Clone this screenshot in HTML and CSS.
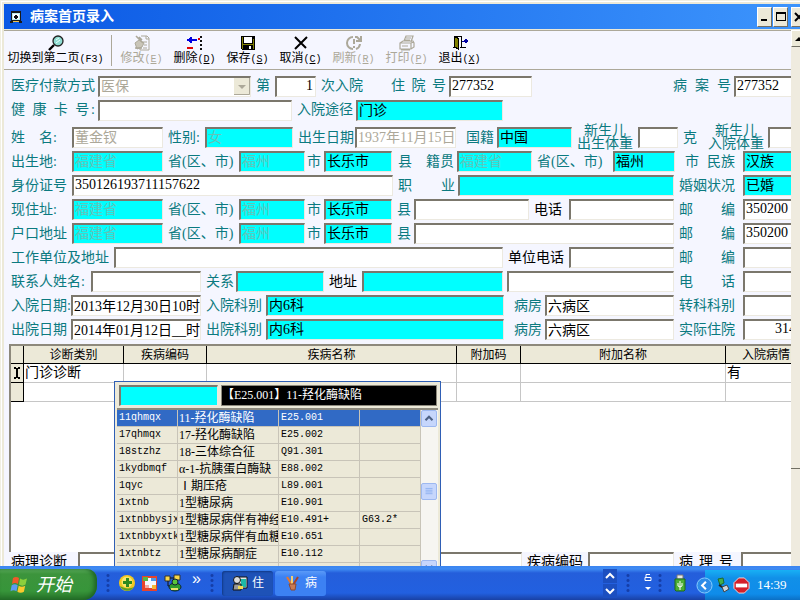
FILE: index.html
```html
<!DOCTYPE html>
<html lang="zh-CN">
<head>
<meta charset="utf-8">
<title>病案首页录入</title>
<link rel="stylesheet" href="styles.css">
</head>
<body>
<main class="window">
  <header class="titlebar">
    <svg class="app-icon" viewBox="0 0 12 12" shape-rendering="crispEdges"><path fill="#1a1a1a" d="M1 0h10v10H1zM0 10h3v2H0zM9 10h3v2H9z"/><path fill="#bfeee8" d="M2 2h8v7H2z"/><path fill="#fff" d="M3 3h6v5H3z"/><path fill="#111" d="M5 4h2v1h1v2H7v1H5V7H4V5h1z"/><path fill="#f2c14e" d="M3 10h6v1H3z"/></svg>
    <h1>病案首页录入</h1>
    <div class="window-buttons">
      <button aria-label="最小化"><svg viewBox="0 0 12 12" shape-rendering="crispEdges"><path d="M2 8h6v2H2z"/></svg></button>
      <button aria-label="最大化"><svg viewBox="0 0 12 12" shape-rendering="crispEdges"><path fill-rule="evenodd" d="M1 1h10v9H1zM2 3v6h8V3z"/></svg></button>
      <button class="close" aria-label="关闭"><svg viewBox="0 0 12 12"><path d="M2 2l8 8M10 2l-8 8" stroke="#000" stroke-width="2"/></svg></button>
    </div>
  </header>
  <div class="client">
    <div class="page">
      <nav class="toolbar">
        <button class="wide"><svg viewBox="0 0 16 16"><path d="M1 15l5-5" stroke="#000" stroke-width="2.4"/><circle cx="10" cy="6" r="5" fill="#8fdcd2" stroke="#222" stroke-width="1.3"/><path d="M8 5l3-2M8 8l4-3" stroke="#e8fffb"/></svg><span>切换到第二页<b>(F3)</b></span></button>
        <i class="divider"></i>
        <button disabled><svg viewBox="0 0 16 16" fill="none" stroke="#aca899"><path d="M7 1h6l2 2v12H6V9M12 1v3h3M9 7h4M10 10h3M9 13h4"/><path fill="#c9c5b8" d="M1 8l4-3 5 3-2 4-5 2z"/><path d="M2 1l7 7M1 13h7M5 2l3 3" stroke-width="1.6"/></svg><span>修改<b>(<u>E</u>)</b></span></button>
        <button><svg viewBox="0 0 16 16" shape-rendering="crispEdges"><path fill="#0000e0" d="M0 4h2V3h1V2h2v2h5v2H5v2H3V7H2V6H0z"/><path fill="#e00000" d="M0 12h6v2H0zM11 3h2v2h-2z"/><path fill="#111" d="M13 1h2v2h-2zM13 5h2v2h-2zM13 9h2v2h-2zM13 13h2v2h-2z"/></svg><span>删除<b>(<u>D</u>)</b></span></button>
        <button><svg viewBox="0 0 16 16" shape-rendering="crispEdges"><path fill="#000" d="M1 1h14v14H2l-1-1z"/><path fill="#808000" d="M2 2h1v12H2zM13 4h1v10h-1zM3 9h10v1H3z"/><path fill="#fff" d="M4 2h8v6H4zM9 11h2v3H9z"/></svg><span>保存<b>(<u>S</u>)</b></span></button>
        <button><svg viewBox="0 0 16 16"><path d="M2 2l11 11M14 2L2 14" stroke="#000" stroke-width="2"/></svg><span>取消<b>(<u>C</u>)</b></span></button>
        <button disabled><svg viewBox="0 0 16 16" fill="none" stroke="#aca899" stroke-width="2"><path d="M7 2a6 6 0 1 0 0 12M10 14a6 6 0 0 0 4-5M9 2l2 0 3 3M15 1v5h-5M8 4v5M8 11v2"/></svg><span>刷新<b>(<u>R</u>)</b></span></button>
        <button disabled><svg viewBox="0 0 16 16" fill="none" stroke="#aca899" stroke-width="1.2"><path d="M5 6l2-5h7l-2 6M7 3h5M6 5h5M1 8l3-2h10l1 2v4l-3 2H1zM1 8h11v6M12 8l3-1M3 11h6M2 15h9"/></svg><span>打印<b>(<u>P</u>)</b></span></button>
        <button><svg viewBox="0 0 16 16" shape-rendering="crispEdges"><path fill="#000" d="M2 1h8v1H2zM9 1h1v12H9zM8 12h6v1H8zM1 12h2v1H1z"/><path fill="#808000" stroke="#000" d="M2.500 1.500l4 2v11l-4-3z"/><path fill="#0000a0" d="M10 6h2V5h1V4h2v1h1v2h-1v1h-2V7h-3z"/></svg><span>退出<b>(<u>X</u>)</b></span></button>
      </nav>

      <form class="record">
        <div class="group">
          <div class="row r-pay">
            <label for="pay">医疗付款方式</label>
            <select id="pay" disabled><option>医保</option></select>
            <label for="times">第</label><input id="times" class="num" value="1">
            <label for="times">次入院</label>
            <label class="spread tight" for="hno">住 院 号</label><input id="hno" value="277352">
            <span></span>
            <label class="spread tight" for="rno">病 案 号</label><input id="rno" value="277352">
          </div>
          <div class="row r-card">
            <label class="spread tight" for="card">健 康 卡 号:</label><input id="card">
            <label for="way">入院途径</label><input id="way" class="cy" value="门诊">
            <span></span>
          </div>
        </div>
        <div class="group lower">
          <div class="row r-name">
            <label for="name">姓　名:</label><input id="name" disabled value="董金钗">
            <label for="sex">性别:</label><input id="sex" class="cy" disabled value="女">
            <label for="birth">出生日期</label><input id="birth" disabled value="1937年11月15日">
            <label class="end" for="nation">国籍</label><input id="nation" class="cy" value="中国">
            <label class="stack" for="w1">新生儿<br>出生体重</label><input id="w1">
            <label for="w1">克</label>
            <label class="stack" for="w2">新生儿<br>入院体重</label><input id="w2">
          </div>
          <div class="row r-born">
            <label for="bp">出生地:</label><input id="bp" class="cy" disabled value="福建省">
            <label for="bp">省(区、市)</label><input id="bc" aria-label="出生地市" class="cy" disabled value="福州">
            <label class="end" for="bc">市</label><input id="bx" aria-label="出生地县" class="cy" value="长乐市">
            <label class="end" for="bx">县</label>
            <label class="end" for="np">籍贯</label><input id="np" class="cy" disabled value="福建省">
            <label for="np">省(区、市)</label><input id="nc" aria-label="籍贯市" class="cy" value="福州">
            <label class="end" for="nc">市</label>
            <label for="ethnic">民族</label><input id="ethnic" class="cy" value="汉族">
          </div>
          <div class="row r-id">
            <label for="idno">身份证号</label><input id="idno" value="350126193711157622">
            <label class="spread tight" for="job">职 业</label><input id="job" class="cy">
            <label for="marry">婚姻状况</label><input id="marry" class="cy" value="已婚">
          </div>
          <div class="row r-live">
            <label for="lp">现住址:</label><input id="lp" class="cy" disabled value="福建省">
            <label for="lp">省(区、市)</label><input id="lc" aria-label="现住址市" class="cy" disabled value="福州">
            <label class="end" for="lc">市</label><input id="lx" aria-label="现住址县" class="cy" value="长乐市">
            <label class="end" for="lx">县</label><input aria-label="现住址详细">
            <label class="dark" for="tel">电话</label><input id="tel">
            <label class="spread" for="zip1">邮 编</label><input id="zip1" value="350200">
          </div>
          <div class="row r-reg">
            <label for="gp">户口地址</label><input id="gp" class="cy" disabled value="福建省">
            <label for="gp">省(区、市)</label><input id="gc" aria-label="户口地址市" class="cy" disabled value="福州">
            <label class="end" for="gc">市</label><input id="gx" aria-label="户口地址县" class="cy" value="长乐市">
            <label class="end" for="gx">县</label><input aria-label="户口地址详细">
            <label class="spread" for="zip2">邮 编</label><input id="zip2" value="350200">
          </div>
          <div class="row r-work">
            <label for="work">工作单位及地址</label><input id="work">
            <label class="dark" for="wtel">单位电话</label><input id="wtel">
            <label class="spread" for="zip3">邮 编</label><input id="zip3">
          </div>
          <div class="row r-contact">
            <label for="cname">联系人姓名:</label><input id="cname">
            <label for="rel">关系</label><input id="rel" class="cy">
            <label class="dark" for="caddr">地址</label><input id="caddr" class="cy">
            <span></span><input aria-label="联系人详细地址">
            <label class="spread" for="ctel">电 话</label><input id="ctel">
          </div>
          <div class="row r-stay">
            <label for="din">入院日期:</label><input id="din" value="2013年12月30日10时">
            <label for="kin">入院科别</label><input id="kin" class="cy" value="内6科">
            <label class="end" for="win">病房</label><input id="win" value="六病区">
            <label for="move">转科科别</label><input id="move">
          </div>
          <div class="row r-stay">
            <label for="dout">出院日期</label><input id="dout" value="2014年01月12日__时">
            <label for="kout">出院科别</label><input id="kout" class="cy" value="内6科">
            <label class="end" for="wout">病房</label><input id="wout" value="六病区">
            <label for="days">实际住院</label><input id="days" class="num" value="314">
          </div>
        </div>

        <section class="diagnosis">
          <table class="grid">
            <colgroup><col class="c-mark"><col class="c-kind"><col class="c-code"><col><col class="c-extra"><col class="c-exname"><col class="c-state"></colgroup>
            <thead><tr><th></th><th>诊断类别</th><th>疾病编码</th><th>疾病名称</th><th>附加码</th><th>附加名称</th><th>入院病情</th></tr></thead>
            <tbody>
              <tr><th><svg viewBox="0 0 8 12" shape-rendering="crispEdges"><path d="M1 0h2v1h2V0h2v2H5v8h2v2H5v-1H3v1H1v-2h2V2H1z"/></svg></th><td>门诊诊断</td><td></td><td></td><td></td><td></td><td>有</td></tr>
              <tr><th></th><td></td><td></td><td></td><td></td><td></td><td></td></tr>
            </tbody>
          </table>
          <div class="lookup">
            <div class="lookup-head">
              <input class="cy" aria-label="检索码">
              <output>【E25.001】11-羟化酶缺陷</output>
            </div>
            <div class="lookup-body">
              <table>
                <colgroup><col class="k-py"><col class="k-name"><col class="k-code"><col></colgroup>
                <tbody>
                <tr class="picked"><td>11qhmqx</td><td class="zh">11-羟化酶缺陷</td><td>E25.001</td><td></td></tr>
                <tr><td>17qhmqx</td><td class="zh">17-羟化酶缺陷</td><td>E25.002</td><td></td></tr>
                <tr><td>18stzhz</td><td class="zh">18-三体综合征</td><td>Q91.301</td><td></td></tr>
                <tr><td>1kydbmqf</td><td class="zh">α-1-抗胰蛋白酶缺</td><td>E88.002</td><td></td></tr>
                <tr><td>1qyc</td><td class="zh">Ⅰ期压疮</td><td>L89.001</td><td></td></tr>
                <tr><td>1xtnb</td><td class="zh">1型糖尿病</td><td>E10.901</td><td></td></tr>
                <tr><td>1xtnbbysjx</td><td class="zh">1型糖尿病伴有神经</td><td>E10.491+</td><td>G63.2*</td></tr>
                <tr><td>1xtnbbyxtk</td><td class="zh">1型糖尿病伴有血糖</td><td>E10.651</td><td></td></tr>
                <tr><td>1xtnbtz</td><td class="zh">1型糖尿病酮症</td><td>E10.112</td><td></td></tr>
                <tr><td></td><td></td><td></td><td></td></tr>
                </tbody>
              </table>
              <div class="luna-scroll">
                <button type="button" aria-label="向上"><svg viewBox="0 0 16 16" fill="none" stroke="#4d6185" stroke-width="2.4"><path d="M4 10l4-4 4 4"/></svg></button>
                <i><svg viewBox="0 0 16 16" stroke="#8caff0"><path d="M4 4.500h8M4 6.500h8M4 8.500h8M4 10.500h8"/></svg></i>
                <button type="button" aria-label="向下"><svg viewBox="0 0 16 16" fill="none" stroke="#4d6185" stroke-width="2.4"><path d="M4 5l4 4 4-4"/></svg></button>
              </div>
            </div>
          </div>
        </section>

        <div class="row r-path">
          <label class="dark" for="path">病理诊断</label><input id="path">
          <label class="dark" for="pcode">疾病编码</label><input id="pcode">
          <label class="dark spread" for="pno">病 理 号</label><input id="pno">
        </div>
      </form>
    </div>
    <div class="side-scroll">
      <button aria-label="向上滚动"><svg viewBox="0 0 14 12"><path d="M3 8l4-4 4 4z"/></svg></button>
      <i></i>
    </div>
  </div>
</main>

<footer class="taskbar">
  <button class="start"><svg viewBox="0 0 20 18"><path fill="#f0592b" d="M3 2c2-1.500 4-1.500 6 0L8 8C6 6.600 4 6.600 2 8z"/><path fill="#8ccf3c" d="M10 2.500c2 1.500 4 1.500 7 0L15.500 8.500c-2 1.500-4.500 1.500-6.500 0z"/><path fill="#5d9bf4" d="M1.700 9.200c2-1.400 4-1.400 6 0l-1.200 6c-2-1.400-4-1.400-6 0z"/><path fill="#fbc92d" d="M8.700 9.700c2 1.500 4.500 1.500 6.500 0l-1.300 6c-2 1.500-4.500 1.500-6.500 0z"/></svg><span>开始</span></button>
  <i class="grip"></i>
  <nav class="quick">
    <button aria-label="安全卫士"><svg viewBox="0 0 18 18"><circle cx="9" cy="9" r="8" fill="#f2c81e"/><path d="M2 12a8 8 0 0 0 14 1c-4 2-9 2-14-1z" fill="#5aa02c"/><circle cx="9" cy="8" r="5.500" fill="#fbe66a"/><path fill="#2f8a1e" d="M8 4h3v3h3v3h-3v3H8v-3H5V7h3z"/></svg></button>
    <button aria-label="图片"><svg viewBox="0 0 18 18"><path fill="#e8432c" d="M1 2h15v15H1z"/><path fill="#f5f8ff" d="M4 4h11v10H4z"/><path fill="#57b843" d="M2 3h5v4H2z"/><path fill="#4f9be8" d="M10 4h5v3h-5z"/><path fill="#f5b836" d="M11 11h4v4h-4z"/><path fill="#f3a9a0" d="M4 11h4v3H4z"/></svg></button>
    <button aria-label="网络助手"><svg viewBox="0 0 18 18"><path fill="#f8d84a" stroke="#333" d="M1 2h5v5H1zM10 1h6v5h-6z"/><path d="M6 4h4M4 7v5h3" stroke="#111" fill="none"/><ellipse cx="11" cy="13" rx="6" ry="4" fill="#2e9b2d" stroke="#123"/><circle cx="11" cy="8" r="3" fill="#58c43a" stroke="#123"/><path fill="#e9e26a" d="M7 14h7v2H7z"/></svg></button>
    <b>»</b>
  </nav>
  <i class="grip"></i>
  <button class="task active"><svg viewBox="0 0 16 16"><path fill="#e8e8e8" stroke="#111" d="M5 2h10v11H5z"/><path fill="#1db9a8" d="M9 4h5v8H9z"/><circle cx="5" cy="5" r="3.500" fill="#ddd" stroke="#111"/><path fill="#999" stroke="#111" d="M2 9h7v6H1z"/><path fill="#f1dc54" d="M6 11h5v3H6z"/></svg><span>住</span></button>
  <button class="task"><svg viewBox="0 0 16 16" fill="none" stroke-width="2"><path stroke="#e8772b" d="M2 2l5 8"/><path stroke="#f3cf72" d="M7 1v8"/><path stroke="#a7442b" d="M13 2L8 10"/><path fill="#c77b55" stroke="#8b4a33" stroke-width="1" d="M4 9h7l-1 6H6z"/></svg><span>病</span></button>
  <div class="pager"><button aria-label="上一组"><svg viewBox="0 0 14 14"><path d="M3 9l4-4 4 4"/></svg></button><button aria-label="下一组"><svg viewBox="0 0 14 14"><path d="M3 5l4 4 4-4"/></svg></button></div>
  <i class="grip"></i>
  <button class="lang" aria-label="语言栏"><svg viewBox="0 0 12 20"><path d="M8 1.500H4V4M3 4.500h6v3H3z" fill="none" stroke="#fff"/><path fill="#fff" d="M3 14h6l-3 3z"/></svg></button>
  <i class="grip"></i>
  <button class="usb" aria-label="USB"><svg viewBox="0 0 12 18"><path fill="#e8e8e8" stroke="#777" d="M3 1h6v4H3z"/><path fill="#4cae34" stroke="#1d6b18" d="M1 5h10v11l-1 1H2l-1-1z"/><path d="M6 7v9M4 9v3l2 1 2-1V9" fill="none" stroke="#fff"/></svg></button>
  <div class="tray">
    <button class="chevron" aria-label="显示图标"><svg viewBox="0 0 18 18"><circle cx="9" cy="9" r="8" fill="#2c8ce8" stroke="#8cd0ff"/><path d="M10.500 5L6.500 9l4 4" fill="none" stroke="#fff" stroke-width="2.2"/></svg></button>
    <svg class="tray-icon" viewBox="0 0 14 16"><path fill="#43b049" stroke="#1d6b30" d="M2 2l5-1 1 5-4 2z"/><path d="M3 8l6 4" stroke="#222" stroke-width="2"/><path fill="#cfd5dc" stroke="#444" d="M6 10l5-2 2 4-5 3z"/></svg>
    <svg class="stop" viewBox="0 0 18 18"><path fill="#d3202a" stroke="#f4d6d6" d="M6 1h6l5 5v6l-5 5H6l-5-5V6z"/><path fill="#fff" d="M3 7h12v4H3z"/></svg>
    <time>14:39</time>
  </div>
</footer>
</body>
</html>
```

FILE: styles.css
```css
* { box-sizing: border-box; }
body {
  margin: 0;
  height: 100vh;
  display: grid;
  grid-template-rows: minmax(0, 1fr) 34px;
  overflow: hidden;
  background: #ece9d8;
  font: 14px/20px "Liberation Serif", "Noto Sans CJK SC", serif;
  color: #000;
}
button, input, select { font: inherit; color: inherit; margin: 0; }
button { padding: 0; border: 0; background: none; }
svg { display: block; flex: none; }
i { font-style: normal; }

.window {
  display: flex;
  flex-direction: column;
  padding: 4px 0 0 4px;
  overflow: hidden;
  box-shadow: inset 1px 1px #f1efe2, inset 2px 2px #fff;
}
.titlebar {
  flex: none;
  height: 25px;
  display: flex;
  align-items: center;
  padding-left: 6px;
  background: linear-gradient(90deg, #0a58e4, #3c94fc);
  color: #fff;
}
.app-icon { width: 12px; height: 12px; }
h1 { margin: 0 auto 0 8px; font-size: 14px; font-weight: bold; }
.window-buttons { display: flex; gap: 1px; margin-right: -6px; }
.window-buttons button {
  width: 15px;
  height: 20px;
  display: grid;
  place-items: center;
  background: #ece9d8;
  border: 1px solid;
  border-color: #fff #716f64 #716f64 #fff;
}
.window-buttons svg { width: 12px; height: 12px; }
.window-buttons .close { margin-left: 2px; }

.client { flex: 1; min-height: 0; display: flex; margin-top: 1px; }
.page {
  flex: 1;
  min-width: 0;
  display: flex;
  flex-direction: column;
  overflow: hidden;
  background: #f5f6ff;
  border-top: 1px solid #aca899;
}
.side-scroll { flex: none; width: 9px; background: #efebdf; overflow: hidden; display: flex; flex-direction: column; }
.side-scroll button { width: 14px; height: 17px; background: #ece9d8; border: 1px solid; border-color: #fff #716f64 #716f64 #fff; }
.side-scroll svg { width: 14px; height: 12px; }
.side-scroll i { height: 422px; border-bottom: 1px solid #716f64; }

.toolbar {
  flex: none;
  height: 39px;
  display: flex;
  align-items: flex-start;
  border-bottom: 1px solid #aca899;
  font-size: 12px;
  line-height: 14px;
}
.toolbar button {
  width: 53px;
  padding-top: 4px;
  display: flex;
  flex-direction: column;
  align-items: center;
  white-space: nowrap;
}
.toolbar button.wide { width: 103px; }
.toolbar button:disabled { color: #aca899; }
.toolbar svg { width: 16px; height: 16px; }
.toolbar b { font: 10px/14px "Liberation Mono", monospace; }
.divider { align-self: center; width: 1px; height: 31px; margin: 0 3px 0 4px; background: #aca899; }

.record { flex: 1; min-height: 0; display: flex; flex-direction: column; padding: 4px 0 0 7px; overflow: hidden; }
.group { flex: none; margin: 0 -8px 3px 0; }
.row { display: grid; grid-template-rows: 24px; height: 24px; align-items: center; }
.row label { padding-left: 5px; color: #0b7a80; white-space: nowrap; line-height: 20px; }
.row label:first-child { padding-left: 0; }
.row label.dark { color: #000; }
.row label.end { text-align: right; padding-left: 0; padding-right: 3px; }
.row label.spread { text-align-last: justify; padding-right: 8px; }
.row label.tight { padding-right: 3px; }
.row label.stack { line-height: 13px; text-align: center; padding-left: 0; }
.lower .row label:not(.stack) { padding-top: 2px; }
.row input, .row select, .lookup input {
  width: 100%;
  min-width: 0;
  height: 21px;
  padding: 0 0 1px 1px;
  border: 0 solid #7b776c;
  border-width: 2px 1px 1px 2px;
  border-right-color: #ece9e0;
  border-bottom-color: #ece9e0;
  border-radius: 0;
  background: #fff;
  line-height: 17px;
  outline: 0;
}
.row input.num { text-align: right; padding-right: 2px; }
.row input.cy, .lookup input.cy { background: #00ffff; padding-bottom: 4px; }
.row input:disabled, .row select:disabled { color: #aca899; opacity: 1; }
.row input:disabled { padding-bottom: 4px; }
.row input.cy:disabled { color: #62c4b8; }
.row select {
  appearance: none;
  background: url("data:image/svg+xml,%3Csvg xmlns='http://www.w3.org/2000/svg' width='16' height='17'%3E%3Cpath fill='%23ece9d8' d='M0 0h16v17H0z'/%3E%3Cpath fill='none' stroke='%23aca899' d='M15.500 0v16.500H0'/%3E%3Cpath fill='%23aca899' d='M4 7h8l-4 4z'/%3E%3C/svg%3E") right center no-repeat #fff;
}

.r-pay { grid-template-columns: 87px 153px 24px 41px 70px 63px 83px 1fr 66px 65px; }
.r-card { grid-template-columns: 87px 194px 64px 147px 1fr; }
.r-name { grid-template-columns: 61px 91px 42px 88px 62px 1fr 41px 75px 66px 40px 26px 64px 31px; }
.r-born { grid-template-columns: 61px 91px 76px 66px 19px 68px 23px 42px 1fr 81px 62px 27px 41px 56px; }
.r-id { grid-template-columns: 61px 321px 65px 1fr 69px 56px; }
.r-live { grid-template-columns: 61px 91px 76px 66px 19px 68px 22px 1fr 40px 105px 69px 56px; }
.r-reg { grid-template-columns: 61px 91px 76px 66px 19px 68px 22px 1fr 69px 56px; }
.r-work { grid-template-columns: 103px 1fr 66px 105px 69px 56px; }
.r-contact { grid-template-columns: 80px 110px 35px 88px 38px 141px 4px 1fr 69px 56px; }
.r-stay { grid-template-columns: 60px 130px 65px 1fr 41px 129px 69px 56px; }
.row.r-path { grid-template-columns: 67px 1fr 66px 86px 67px 58px; flex: none; height: 14px; margin-right: -8px; align-items: start; }

.diagnosis {
  position: relative;
  flex: 1;
  min-height: 0;
  margin-left: -2px;
  background: #fff;
  border: solid #8d897c;
  border-width: 2px 0 0 2px;
}
.diagnosis table { border-collapse: separate; border-spacing: 0; table-layout: fixed; }
.grid { width: 100%; }
.grid th { height: 18px; padding: 0; background: #ece9d8; border: solid #000; border-width: 0 1px 1px 0; font-size: 12px; line-height: 16px; font-weight: normal; white-space: nowrap; overflow: hidden; }
.grid td { height: 19px; padding: 0 0 0 1px; border: solid #c6c6c6; border-width: 0 1px 1px 0; line-height: 18px; }
.grid th:last-child { padding-left: 16px; text-align: left; border-right: 0; }
.grid td:last-child { border-right: 0; }
.grid tbody th svg { width: 8px; height: 12px; margin: 0 auto; }
.c-mark { width: 13px; }
.c-kind { width: 100px; }
.c-code { width: 83px; }
.c-extra { width: 64px; }
.c-exname { width: 205px; }
.c-state { width: 65px; }

.lookup {
  position: absolute;
  left: 103px;
  top: 35px;
  width: 327px;
  height: 200px;
  padding: 2px;
  background: #ece9d8;
  border: 1px solid #2f5fb5;
  font-size: 12px;
}
.lookup-head { display: flex; gap: 3px; height: 23px; padding: 1px 1px 1px 2px; align-items: center; }
.lookup-head input.cy { width: 99px; }
.lookup-head output { flex: 1; height: 21px; border: 1px solid #8d897c; background: #000; color: #fff; line-height: 19px; white-space: nowrap; }
.lookup-body { display: flex; border-top: 2px solid #8d897c; margin-top: 1px; }
.lookup-body table { width: 304px; flex: none; }
.lookup-body td {
  height: 17px;
  padding: 0 0 0 2px;
  overflow: hidden;
  border: solid #c8c4b8;
  border-width: 0 1px 1px 0;
  font: 10px/16px "Liberation Mono", monospace;
  white-space: nowrap;
}
.lookup-body td.zh { padding-left: 1px; font: 12px/16px "Liberation Serif", "Noto Sans CJK SC", serif; }
.lookup-body .picked td { background: #316ac5; color: #fff; }
.k-py { width: 61px; }
.k-name { width: 101px; }
.k-code { width: 81px; }
.luna-scroll { width: 17px; height: 170px; display: flex; flex-direction: column; background: #f6f5f1; }
.luna-scroll button, .luna-scroll i { flex: none; width: 16px; height: 17px; border: 1px solid #9db8f0; border-radius: 2px; background: #c6d6fc; }
.luna-scroll i { margin: 56px 0 60px; }
.luna-scroll svg { width: 14px; height: 15px; }

.taskbar {
  position: relative;
  display: flex;
  align-items: center;
  overflow: hidden;
  background: linear-gradient(#3b84f0 0, #3f8cf3 3px, #245edb 7px, #2260e0 27px, #1941a5 34px);
  color: #fff;
}
.start {
  align-self: stretch;
  width: 97px;
  margin-top: 3px;
  padding-left: 10px;
  display: flex;
  align-items: center;
  gap: 6px;
  border-radius: 0 10px 14px 0;
  background: linear-gradient(#62b562 0, #3c943c 5px, #37953a 22px, #256f28 31px);
  box-shadow: inset -3px 0 4px #1e6424;
  font-size: 18px;
  font-style: italic;
}
.start svg { width: 20px; height: 18px; }
.grip { flex: none; width: 4px; height: 20px; margin: 0 8px 0 9px; background: radial-gradient(circle, #153ea8 1px, transparent 2px) 0 0 / 4px 5px; }
.quick { display: flex; align-items: center; gap: 5px; }
.quick svg { width: 18px; height: 18px; }
.quick b { margin: 0 0 8px 5px; font: 16px/16px "Liberation Sans", sans-serif; }
.task {
  width: 51px;
  height: 25px;
  margin-right: 2px;
  padding-left: 10px;
  display: flex;
  align-items: center;
  gap: 4px;
  border-radius: 3px;
  background: linear-gradient(#5a9af8, #3c81f3 6px);
  font-size: 12px;
}
.task.active { background: #1e52b7; box-shadow: inset 1px 1px 2px #123a86; }
.task svg { width: 16px; height: 16px; }
.pager { margin-left: auto; display: grid; gap: 1px; }
.pager button { width: 14px; height: 14px; background: #1c4fc0; }
.pager path { fill: none; stroke: #fff; stroke-width: 2; }
.lang svg { width: 12px; height: 20px; }
.lang { margin: 0 -5px 0 4px; }
.usb { margin: 0 19px 0 4px; }
.usb svg { width: 12px; height: 18px; }
.tray {
  align-self: stretch;
  width: 95px;
  margin-top: 4px;
  display: flex;
  align-items: center;
  gap: 3px;
  background: linear-gradient(#18b0f4, #1190e8 8px, #0f8cea 24px, #0c6fc4);
}
.chevron { margin-left: -9px; }
.chevron svg, .stop { width: 17px; height: 17px; }
.tray-icon { width: 14px; height: 16px; }
.tray time { margin-left: 4px; font-size: 13px; line-height: 16px; }
```
